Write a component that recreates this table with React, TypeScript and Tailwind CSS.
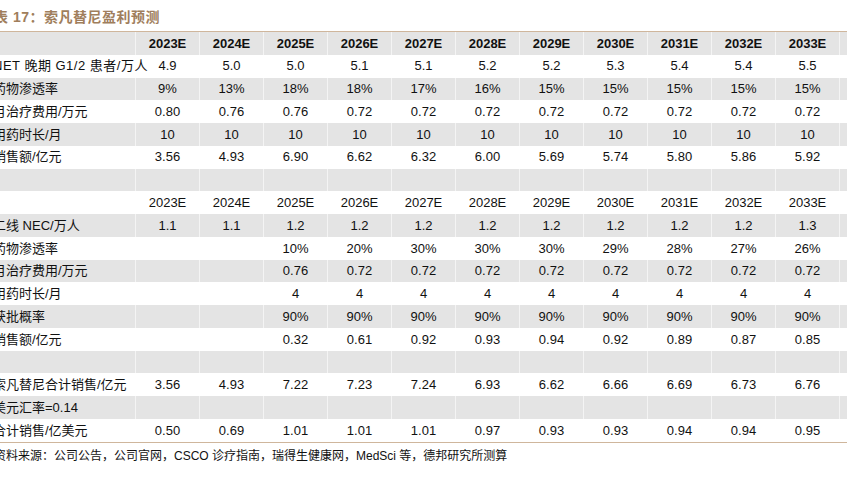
import React from "react";

const years = ["2023E", "2024E", "2025E", "2026E", "2027E", "2028E", "2029E", "2030E", "2031E", "2032E", "2033E"];

type Row = { label: string; values: string[]; bold?: boolean; wide?: boolean };

const e = (n: number) => Array(n).fill("");

const rows: Row[] = [
  { label: "", values: years, bold: true },
  { label: "NET 晚期 G1/2 患者/万人", values: ["4.9", "5.0", "5.0", "5.1", "5.1", "5.2", "5.2", "5.3", "5.4", "5.4", "5.5"], wide: true },
  { label: "药物渗透率", values: ["9%", "13%", "18%", "18%", "17%", "16%", "15%", "15%", "15%", "15%", "15%"] },
  { label: "月治疗费用/万元", values: ["0.80", "0.76", "0.76", "0.72", "0.72", "0.72", "0.72", "0.72", "0.72", "0.72", "0.72"] },
  { label: "用药时长/月", values: ["10", "10", "10", "10", "10", "10", "10", "10", "10", "10", "10"] },
  { label: "销售额/亿元", values: ["3.56", "4.93", "6.90", "6.62", "6.32", "6.00", "5.69", "5.74", "5.80", "5.86", "5.92"] },
  { label: "", values: e(11) },
  { label: "", values: years },
  { label: "二线 NEC/万人", values: ["1.1", "1.1", "1.2", "1.2", "1.2", "1.2", "1.2", "1.2", "1.2", "1.2", "1.3"] },
  { label: "药物渗透率", values: ["", "", "10%", "20%", "30%", "30%", "30%", "29%", "28%", "27%", "26%"] },
  { label: "月治疗费用/万元", values: ["", "", "0.76", "0.72", "0.72", "0.72", "0.72", "0.72", "0.72", "0.72", "0.72"] },
  { label: "用药时长/月", values: ["", "", "4", "4", "4", "4", "4", "4", "4", "4", "4"] },
  { label: "获批概率", values: ["", "", "90%", "90%", "90%", "90%", "90%", "90%", "90%", "90%", "90%"] },
  { label: "销售额/亿元", values: ["", "", "0.32", "0.61", "0.92", "0.93", "0.94", "0.92", "0.89", "0.87", "0.85"] },
  { label: "", values: e(11) },
  { label: "索凡替尼合计销售/亿元", values: ["3.56", "4.93", "7.22", "7.23", "7.24", "6.93", "6.62", "6.66", "6.69", "6.73", "6.76"] },
  { label: "美元汇率=0.14", values: e(11) },
  { label: "合计销售/亿美元", values: ["0.50", "0.69", "1.01", "1.01", "1.01", "0.97", "0.93", "0.93", "0.94", "0.94", "0.95"] },
];

const App: React.FC = () => {
  return (
    <div className="w-[847px] h-[483px] overflow-hidden bg-white text-[#111] font-['Liberation_Sans','Noto_Sans_CJK_SC',sans-serif]">
      <div className="w-[893px] -ml-[43px] flex flex-col">
        <div className="h-[31px] flex items-center pl-[37px] pt-[3px] text-[14px] font-bold text-[#a07e5c] tracking-[0.5px]">
          表 17：索凡替尼盈利预测
        </div>
        <div className="border-t border-[#cfb69c] border-b">
          {rows.map((row, i) => (
            <div
              key={i}
              className={`flex h-[22.78px] items-center text-[13px] ${i % 2 === 0 ? "bg-[#e4e4e4]" : "bg-white"} ${row.bold ? "font-bold" : ""}`}
            >
              <div
                className={`w-[179px] shrink-0 pl-[36px] whitespace-nowrap h-full flex items-center border-r border-white/60 ${row.wide ? "tracking-[0.5px]" : ""}`}
              >
                {row.label}
              </div>
              {row.values.map((v, j) => (
                <div key={j} className="w-[64px] shrink-0 text-center h-full flex items-center justify-center border-r border-white/60">
                  {v}
                </div>
              ))}
              <div className="flex-1" />
            </div>
          ))}
        </div>
        <div className="pl-[37px] pt-[4px] text-[12px] whitespace-nowrap">
          资料来源：公司公告，公司官网，CSCO 诊疗指南，瑞得生健康网，MedSci 等，德邦研究所测算
        </div>
      </div>
    </div>
  );
};

export default App;
